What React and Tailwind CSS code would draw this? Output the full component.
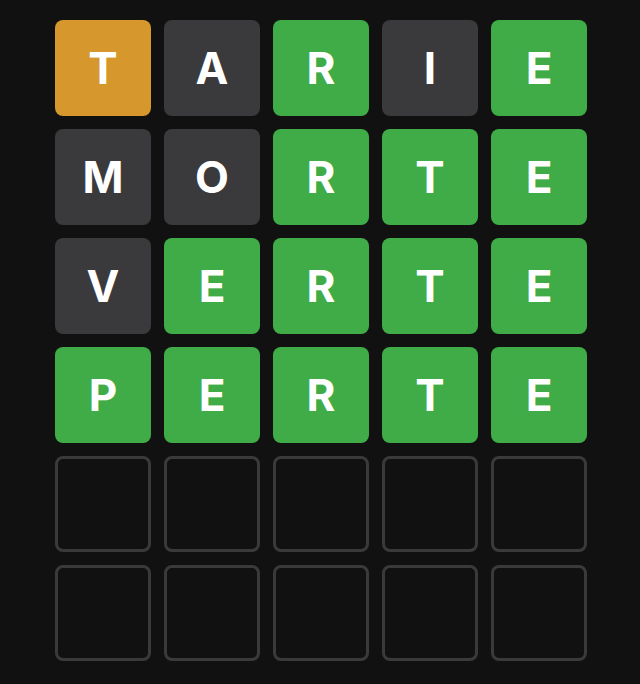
import React from "react";

const rows = [
  ["TARIE", "ygrgg".replace("y", "y")],
];

const board = [
  { word: "TARIE", marks: "yxgxg" },
  { word: "MORTE", marks: "xxggg" },
  { word: "VERTE", marks: "xgggg" },
  { word: "PERTE", marks: "ggggg" },
  { word: "", marks: "" },
  { word: "", marks: "" },
];

const tileColor = {
  y: "bg-[#d6982c]",
  x: "bg-[#3a3a3c]",
  g: "bg-[#3fac48]",
};

const Tile = ({ letter, mark }) => {
  if (!letter) {
    return <div className="w-[96px] h-[96px] rounded-[8px] border-[3px] border-[#3a3a3c]" />;
  }
  return (
    <div
      className={`w-[96px] h-[96px] rounded-[8px] flex items-center justify-center text-white font-bold text-[44px] ${tileColor[mark]}`}
    >
      {letter}
    </div>
  );
};

export default function App() {
  return (
    <div
      className="w-[640px] h-[684px] bg-[#111111] pt-[20px] pl-[55px]"
      style={{ fontFamily: "Inter, 'Liberation Sans', sans-serif" }}
    >
      <div className="grid grid-cols-[repeat(5,96px)] gap-[13px]">
        {board.map((row, r) =>
          [0, 1, 2, 3, 4].map(i => (
            <Tile key={`${r}-${i}`} letter={row.word[i]} mark={row.marks[i]} />
          ))
        )}
      </div>
    </div>
  );
}
